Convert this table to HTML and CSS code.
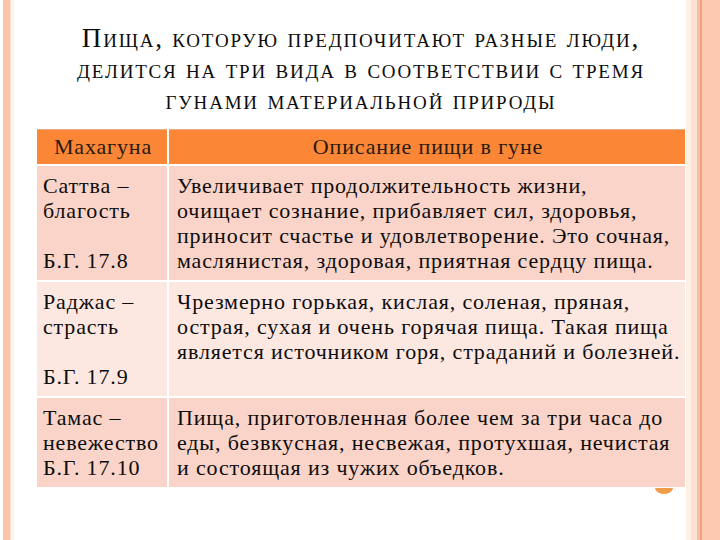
FILE: index.html
```html
<!DOCTYPE html>
<html lang="ru">
<head>
<meta charset="utf-8">
<title>Пища в гунах</title>
<link rel="stylesheet" href="styles.css">
</head>
<body>
<div class="slide">
  <div class="content">
    <h1 class="title">Пища, которую предпочитают разные люди,<br>делится на три вида в соответствии с тремя<br>гунами материальной природы</h1>
    <div class="table">
      <div class="cell head">Махагуна</div>
      <div class="cell head">Описание пищи в гуне</div>

      <div class="cell dark">Саттва –<br>благость<br><br>Б.Г. 17.8</div>
      <div class="cell dark">Увеличивает продолжительность жизни,<br>очищает сознание, прибавляет сил, здоровья,<br>приносит счастье и удовлетворение. Это сочная,<br>маслянистая, здоровая, приятная сердцу пища.</div>

      <div class="cell light">Раджас –<br>страсть<br><br>Б.Г. 17.9</div>
      <div class="cell light">Чрезмерно горькая, кислая, соленая, пряная,<br>острая, сухая и очень горячая пища. Такая пища<br>является источником горя, страданий и болезней.</div>

      <div class="cell dark">Тамас –<br>невежество<br>Б.Г. 17.10</div>
      <div class="cell dark">Пища, приготовленная более чем за три часа до<br>еды, безвкусная, несвежая, протухшая, нечистая<br>и состоящая из чужих объедков.</div>
    </div>
  </div>
  <div class="blob"></div>
</div>
</body>
</html>
```

FILE: styles.css
```css
html, body {
  margin: 0;
  padding: 0;
}
body {
  width: 720px;
  height: 540px;
  overflow: hidden;
  font-family: "Liberation Serif", "DejaVu Serif", serif;
  color: #0d0d0d;
  background: linear-gradient(to right,
    #ffffff 0, #ffffff 3px,
    #fcc4a9 3px, #fcc4a9 10px,
    #fde0d2 10px, #fde0d2 11px,
    #fff6f0 11px, #fff6f0 13px,
    #f3f0f8 13px, #f3f0f8 14px,
    #ffffff 14px, #ffffff 686px,
    #fdf1e6 686px, #fdf1e6 691px,
    #fde1d3 691px, #fde1d3 697px,
    #f9bfa2 697px, #f9bfa2 700px,
    #f2a17e 700px, #f2a17e 702px,
    #fdc9b1 702px, #fdc9b1 720px);
}
.slide {
  position: relative;
  width: 720px;
  height: 540px;
}
.content {
  padding: 0 0 0 37px;
  width: 648px;
}
.title {
  margin: 0 0 13px 0;
  padding-top: 23px;
  font-size: 27px;
  font-weight: normal;
  font-variant: small-caps;
  letter-spacing: 1.8px;
  line-height: 31px;
  text-align: center;
  color: #0d0d0d;
}
.table {
  display: grid;
  grid-template-columns: 130px 516px;
  column-gap: 2px;
  row-gap: 2px;
  font-size: 22px;
  letter-spacing: 0.85px;
  line-height: 25px;
}
.cell {
  padding: 7px 4px 7px 6px;
  white-space: nowrap;
}
.cell:nth-child(even) {
  padding-left: 8px;
}
.head {
  background: #fb8736;
  border-top: 1px solid #e4ae84;
  height: 35px;
  box-sizing: border-box;
  padding-top: 4px;
  padding-bottom: 0;
  text-align: center;
  color: #2a1a10;
}
.head:nth-child(even) {
  padding-left: 6px;
}
.dark {
  background: #fad4c8;
}
.light {
  background: #fde7e1;
}
.blob {
  position: absolute;
  left: 655px;
  top: 488px;
  width: 18px;
  height: 6px;
  border-radius: 0 0 9px 9px / 0 0 6px 6px;
  background: #f19a48;
}
```
